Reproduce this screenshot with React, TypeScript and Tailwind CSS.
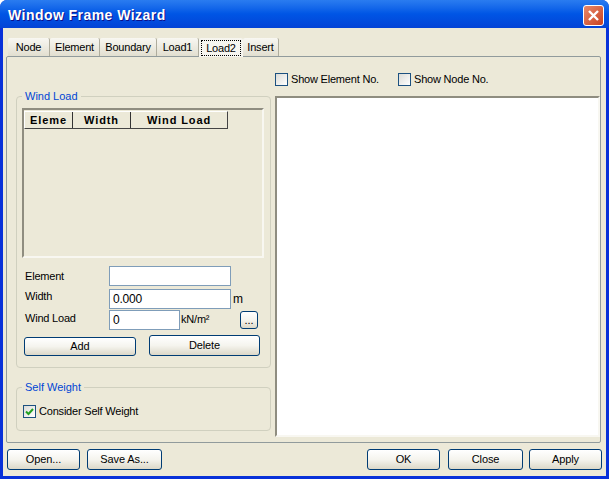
import type { ReactNode } from 'react';

const tabs = [
  { label: 'Node', width: 'w-[42px]' },
  { label: 'Element', width: 'w-[50px]' },
  { label: 'Boundary', width: 'w-[57px]' },
  { label: 'Load1', width: 'w-[42px]' },
  { label: 'Load2', width: 'w-[44px]', active: true },
  { label: 'Insert', width: 'w-[36px]' },
];

// XP style push button
function XpButton({ className, children }: { className: string; children: ReactNode }) {
  return (
    <button className={`flex items-center justify-center rounded-[3px] border border-[#003c74] bg-gradient-to-b from-white via-[#f5f4ee] to-[#dcd8c8] text-[11px] tracking-[-0.1px] text-black ${className}`}>
      {children}
    </button>
  );
}

function Check({ checked, label }: { checked?: boolean; label: string }) {
  return (
    <label className="flex items-center gap-[3px]">
      <span className="flex h-[13px] w-[13px] items-center justify-center border border-[#1c5180] bg-gradient-to-br from-[#dcdcd7] to-white">
        {checked && (
          <svg viewBox="0 0 11 11" className="h-[11px] w-[11px]">
            <path d="M2 5.5 L4.5 8 L9 3" fill="none" stroke="#21a121" strokeWidth="2" />
          </svg>
        )}
      </span>
      <span>{label}</span>
    </label>
  );
}

function Field({ className, value }: { className: string; value?: string }) {
  return (
    <div className={`flex h-[20px] items-center border border-[#7f9db9] bg-white px-[3px] text-[12px] ${className}`}>{value}</div>
  );
}

function Group({ title, className, children }: { title: string; className: string; children: ReactNode }) {
  return (
    <fieldset className={`rounded-[4px] border border-[#d0d0bf] ${className}`}>
      <legend className="px-[3px] text-[11px] leading-[14px] tracking-normal text-[#0046d5]">{title}</legend>
      {children}
    </fieldset>
  );
}

export default function App() {
  return (
    <div className="flex h-[479px] w-[609px] flex-col overflow-hidden rounded-t-[7px] bg-[#0831d9] text-[11px] tracking-[-0.2px] text-black [font-family:'Liberation_Sans',sans-serif]">
      {/* タイトルバー */}
      <div className="flex h-[28px] shrink-0 items-center justify-between bg-gradient-to-b from-[#2a7cf0] via-[#0055e5] to-[#0343d6] pl-[8px] pr-[5px] pt-[2px]">
        <span className="text-[14px] font-bold tracking-[0.45px] text-white [text-shadow:1px_1px_0_#0f1089]">Window Frame Wizard</span>
        <div className="flex h-[21px] w-[21px] items-center justify-center rounded-[3px] border border-white bg-gradient-to-br from-[#e8886a] to-[#c8401c]">
          <svg viewBox="0 0 13 13" className="h-[13px] w-[13px]">
            <path d="M2 2 L11 11 M11 2 L2 11" stroke="white" strokeWidth="2.4" />
          </svg>
        </div>
      </div>

      <div className="mx-[3px] mb-[3px] flex min-h-0 flex-1 flex-col bg-[#ece9d8] px-[3px]">
        {/* タブ */}
        <div className="relative z-10 mt-[10px] flex h-[18px] shrink-0 items-start pl-[2px]">
          {tabs.map((tab) => (
            <div
              key={tab.label}
              className={`flex items-center justify-center rounded-t-[2px] ${tab.width} ${tab.active ? 'h-[19px] bg-[#f6f5ef]' : 'h-[18px] border-r border-[#aeac9d] bg-gradient-to-b from-[#f8f7f2] to-[#e2dfd0]'}`}
            >
              {tab.active ? (
                <span className="border border-dotted border-black px-[4px] leading-[14px]">{tab.label}</span>
              ) : (
                tab.label
              )}
            </div>
          ))}
        </div>

        {/* タブパネル */}
        <div className="flex h-[387px] w-[595px] shrink-0 rounded-[2px] border border-[#919b9c] bg-[#ece9d8] pl-[9px]">
          <div className="flex w-[255px] shrink-0 flex-col pt-[32px]">
            <Group title="Wind Load" className="h-[279px] pl-[5px] pr-[6px]">
              <div className="mt-[5px] h-[150px] w-[242px] border-2 border-[#8f8d80] border-b-[#f8f7f1] border-r-[#f8f7f1] bg-[#ece9d8] pt-[1px]">
                <div className="flex h-[18px] w-[204px] border border-[#444] border-l-white border-t-white text-[11px] font-bold tracking-[0.9px]">
                  <span className="flex w-[48px] items-center justify-center border-r border-[#333]">Eleme</span>
                  <span className="flex w-[58px] items-center justify-center border-r border-[#333]">Width</span>
                  <span className="flex flex-1 items-center justify-center">Wind Load</span>
                </div>
              </div>
              <div className="mt-[8px] flex h-[20px] items-center pl-[3px]">
                <span className="w-[84px]">Element</span>
                <Field className="w-[122px]" />
              </div>
              <div className="mt-[3px] flex h-[20px] items-center pl-[3px]">
                <span className="w-[84px] pb-[5px]">Width</span>
                <Field className="w-[122px]" value="0.000" />
                <span className="ml-[2px] text-[12px]">m</span>
              </div>
              <div className="mt-[1px] flex h-[20px] items-center pl-[3px]">
                <span className="w-[84px] pb-[3px]">Wind Load</span>
                <Field className="w-[71px]" value="0" />
                <span className="ml-[1px] w-[59px] pb-[2px]">kN/m²</span>
                <XpButton className="h-[18px] w-[18px] leading-none">...</XpButton>
              </div>
              <div className="mt-[5px] flex items-end pl-[2px]">
                <XpButton className="h-[19px] w-[112px]">Add</XpButton>
                <XpButton className="ml-[13px] h-[21px] w-[111px]">Delete</XpButton>
              </div>
            </Group>
            <Group title="Self Weight" className="mt-[12px] h-[51px] px-[5px] pt-[9px]">
              <div className="pl-px">
                <Check checked label="Consider Self Weight" />
              </div>
            </Group>
          </div>

          <div className="ml-[4px] flex w-[325px] shrink-0 flex-col pt-[15px]">
            <div className="flex h-[14px] items-center">
              <div className="w-[123px]">
                <Check label="Show Element No." />
              </div>
              <Check label="Show Node No." />
            </div>
            <div className="mt-[10px] h-[341px] border-2 border-[#8f8d80] border-b-[#f8f7f1] border-r-[#f8f7f1] bg-white" />
          </div>
        </div>

        {/* 下部ボタン */}
        <div className="mt-[6px] flex h-[21px] shrink-0 items-center pl-px">
          <XpButton className="h-[21px] w-[73px]">Open...</XpButton>
          <XpButton className="ml-[7px] h-[21px] w-[75px]">Save As...</XpButton>
          <XpButton className="ml-[205px] h-[21px] w-[73px]">OK</XpButton>
          <XpButton className="ml-[8px] h-[21px] w-[75px]">Close</XpButton>
          <XpButton className="ml-[6px] h-[21px] w-[73px]">Apply</XpButton>
        </div>
      </div>
    </div>
  );
}
